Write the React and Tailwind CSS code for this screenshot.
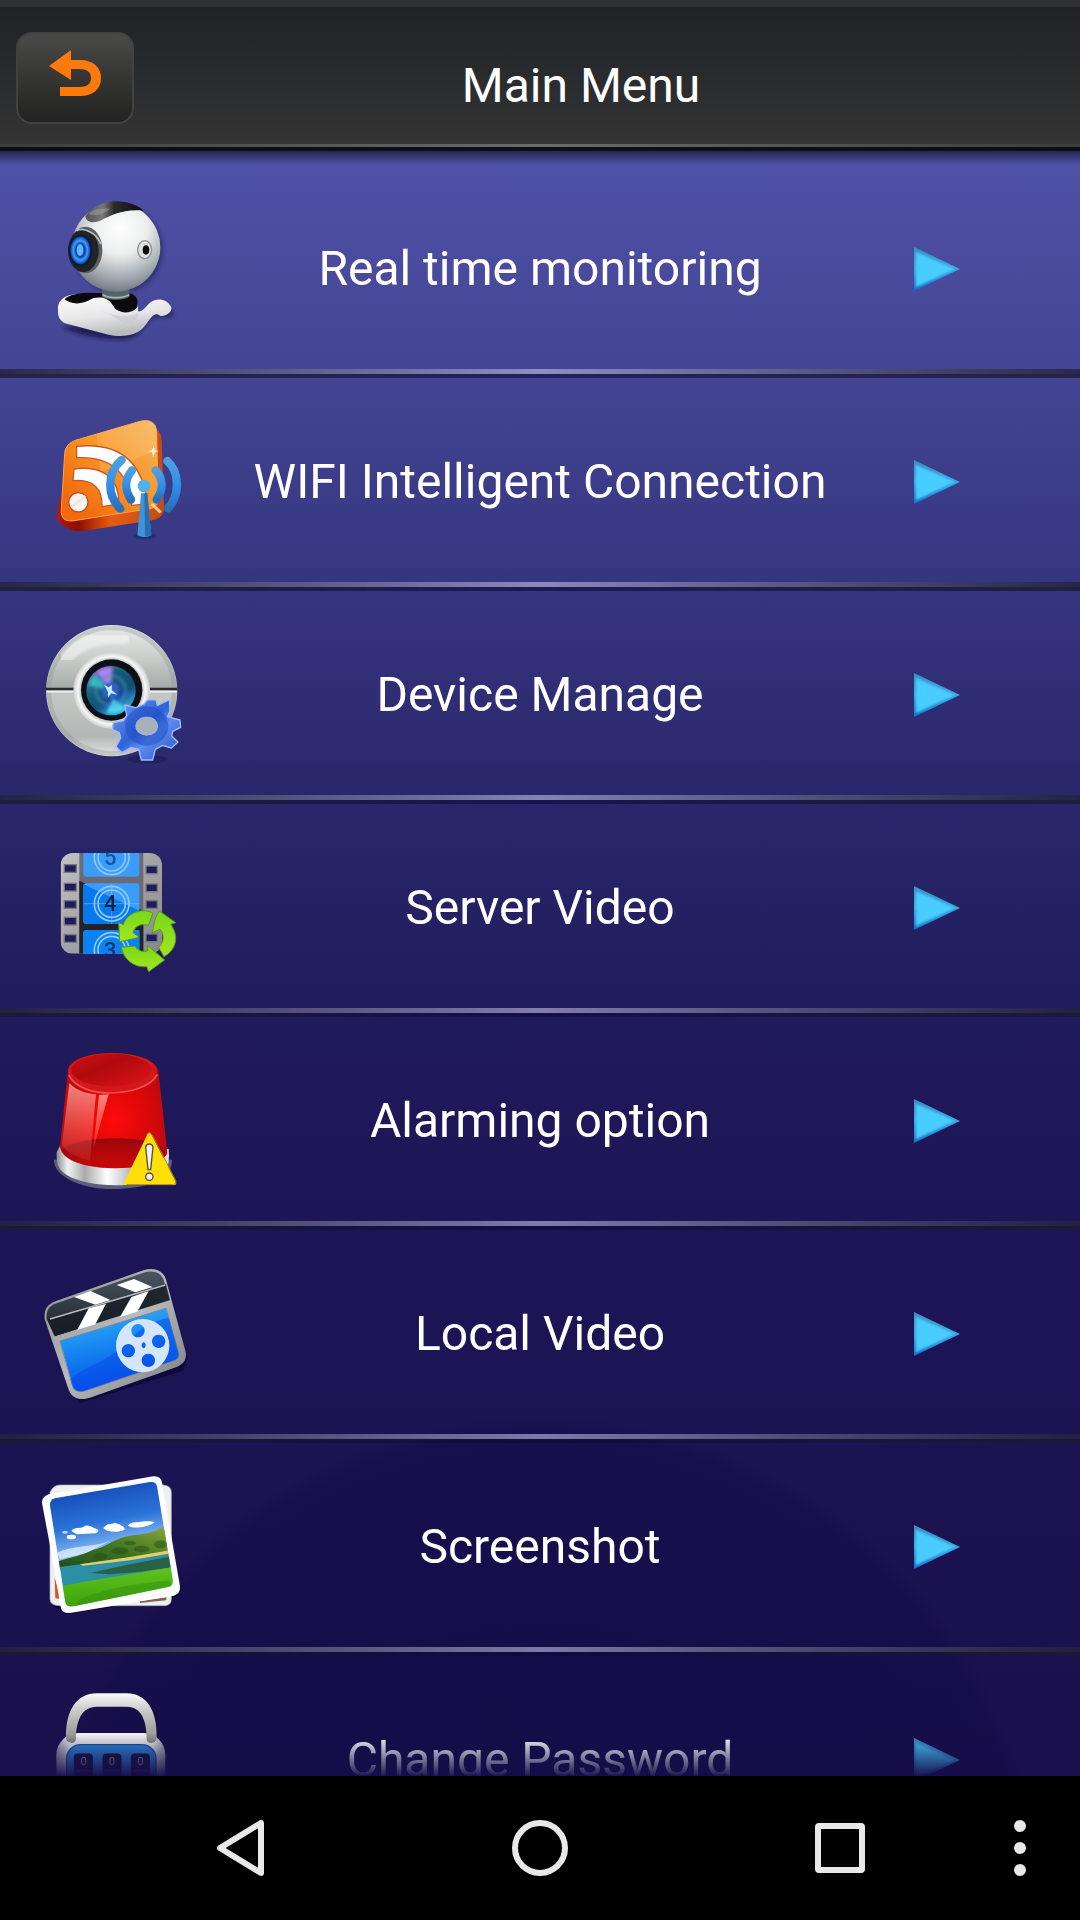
import React from 'react';

// 510 unit canvas, 3 units per pixel
function Icon({ top = 0, children }) {
  return (
    <svg viewBox={`0 ${top} 510 510`} className="w-[170px] h-[170px]" aria-hidden="true">
      {children}
    </svg>
  );
}

function WebcamIcon() {
  return (
    <Icon top={10}>
      <defs>
        <radialGradient id="camBall" cx="0.55" cy="0.28" r="0.75">
          <stop offset="0" stopColor="#fff" />
          <stop offset="0.4" stopColor="#eceeee" />
          <stop offset="0.75" stopColor="#a3abb1" />
          <stop offset="1" stopColor="#6a757e" />
        </radialGradient>
        <linearGradient id="camTop" x1="0" x2="1">
          <stop offset="0" stopColor="#555" />
          <stop offset="0.3" stopColor="#777" />
          <stop offset="0.5" stopColor="#2b2b2b" />
          <stop offset="1" stopColor="#0c0c0c" />
        </linearGradient>
        <linearGradient id="camBase" x1="0" y1="0" x2="0.3" y2="1">
          <stop offset="0" stopColor="#fff" />
          <stop offset="0.6" stopColor="#e6e6e8" />
          <stop offset="1" stopColor="#b9babd" />
        </linearGradient>
        <radialGradient id="camLens">
          <stop offset="0" stopColor="#4fb4ff" />
          <stop offset="0.25" stopColor="#1667e0" />
          <stop offset="0.45" stopColor="#0a3dab" />
          <stop offset="0.7" stopColor="#3fa0fa" />
          <stop offset="1" stopColor="#0d3c98" />
        </radialGradient>
        <filter id="soft" x="-20%" y="-20%" width="140%" height="140%">
          <feGaussianBlur stdDeviation="7" />
        </filter>
      </defs>
      <path d="M95 440C150 470 250 480 290 474C330 470 345 430 365 410C380 400 430 420 430 395L400 380L330 420Z" fill="#15163f" opacity="0.8" filter="url(#soft)" />
      <circle cx="266" cy="206" r="132" fill="#20214f" opacity="0.6" filter="url(#soft)" />
      <path d="M84 392C80 360 100 344 140 340H290C320 345 326 365 324 392C335 395 345 380 360 366C375 352 410 350 424 380C426 402 395 412 385 402C365 394 358 425 335 446C315 466 270 470 235 462L105 428C90 420 84 410 84 392Z" fill="url(#camBase)" />
      <path d="M104 356C120 336 180 334 225 338H300C322 345 326 362 322 380C310 396 280 402 256 385C235 350 220 348 190 352C160 372 125 374 104 356Z" fill="#0b0b0d" />
      <path d="M210 390C260 410 300 410 324 398C330 420 290 445 262 446C300 430 250 402 210 390Z" fill="#c9cacd" opacity="0.7" />
      <path d="M216 325H298V348C285 360 230 360 216 348Z" fill="#586368" />
      <path d="M218 342C240 354 275 354 298 342" stroke="#a9b3b8" strokeWidth="5" fill="none" />
      <circle cx="258" cy="200" r="133" fill="url(#camBall)" />
      <path d="M166 106C190 74 225 62 262 62C300 64 325 76 340 90C280 84 245 104 215 118C190 130 168 126 166 106Z" fill="url(#camTop)" />
      <path d="M176 100C195 80 225 84 240 84C222 100 195 108 176 100Z" fill="#999" opacity="0.6" />
      <ellipse cx="167" cy="208" rx="50" ry="70" fill="#5c5e61" />
      <ellipse cx="160" cy="210" rx="46" ry="64" fill="#222326" />
      <ellipse cx="152" cy="210" rx="35" ry="48" fill="#0a1a3c" />
      <ellipse cx="151" cy="209" rx="30" ry="42" fill="url(#camLens)" />
      <ellipse cx="150" cy="208" rx="10" ry="18" fill="#5fb9ff" />
      <path d="M140 150C160 140 200 155 212 190" stroke="#b5c2cc" strokeWidth="5" fill="none" />
      <ellipse cx="344" cy="207" rx="21" ry="27" fill="#dfe1e2" stroke="#8d9092" strokeWidth="4" />
      <ellipse cx="348" cy="208" rx="10" ry="14" fill="#0b0b0c" />
    </Icon>
  );
}

function WifiIcon() {
  return (
    <Icon top={-11}>
      <defs>
        <linearGradient id="rssFace" x1="0.1" y1="0.8" x2="0.9" y2="0">
          <stop offset="0" stopColor="#f26a0c" />
          <stop offset="0.5" stopColor="#fb9426" />
          <stop offset="1" stopColor="#f3b35c" />
        </linearGradient>
        <linearGradient id="rssSide" x1="0" x2="1">
          <stop offset="0" stopColor="#b31a03" />
          <stop offset="0.2" stopColor="#8c0f02" />
          <stop offset="0.5" stopColor="#e65a12" />
          <stop offset="1" stopColor="#c54c14" />
        </linearGradient>
        <linearGradient id="wave" x1="0" y1="0" x2="0" y2="1">
          <stop offset="0" stopColor="#4f9fe0" />
          <stop offset="0.6" stopColor="#2c8be8" />
          <stop offset="1" stopColor="#2a6fb8" />
        </linearGradient>
      </defs>
      <path d="M92 290C80 340 76 352 90 368L122 388C140 394 160 390 180 388L370 358C395 350 402 340 402 320L395 120C394 98 385 90 374 80Z" fill="url(#rssSide)" />
      <path d="M104 158C106 138 118 126 136 119L330 62C358 54 378 66 380 92L384 290C386 314 374 322 354 325L132 360C104 364 92 352 94 326Z" fill="url(#rssFace)" stroke="#ffa548" strokeWidth="3" />
      <path d="M210 215C280 190 340 165 381 148L380 92C378 66 358 54 330 62L200 100Z" fill="#ffe2a0" opacity="0.2" />
      <path d="M140 137C230 128 335 150 352 310L305 314C296 210 240 166 140 171Z" fill="#fff" stroke="#c65a2a" strokeWidth="4" />
      <path d="M132 205C210 194 268 224 266 310L216 318C218 262 190 236 129 240Z" fill="#fff" stroke="#c65a2a" strokeWidth="4" />
      <circle cx="145" cy="305" r="29" fill="#f7f4f0" stroke="#b8502a" strokeWidth="4" />
      <path d="M124 320L166 286" stroke="#ebe6e0" strokeWidth="8" />
      <path d="M371 134L374 148L386 151L375 155L370 170L366 155L354 152L367 147Z" fill="#fff" opacity="0.8" />
      <path d="M365 310L392 335" stroke="#ffe7b0" strokeWidth="9" opacity="0.8" />
      <g fill="none" stroke="url(#wave)" strokeLinecap="round" strokeWidth="25">
        <path d="M275 178C230 215 230 285 271 324" />
        <path d="M306 209C284 235 284 268 303 297" />
        <path d="M377 209C400 235 400 268 380 297" />
        <path d="M412 181C450 215 450 285 414 323" />
      </g>
      <ellipse cx="344" cy="406" rx="36" ry="10" fill="#1d2a6e" opacity="0.7" />
      <path d="M333 278H352L364 404C352 411 336 411 322 404Z" fill="#3f93d8" />
      <path d="M343 278H352L364 404L345 408Z" fill="#296fae" />
      <circle cx="342" cy="256" r="19" fill="#54b0ec" />
    </Icon>
  );
}

function DeviceIcon() {
  return (
    <Icon top={-2}>
      <defs>
        <linearGradient id="devBody" x1="0" y1="0" x2="0" y2="1">
          <stop offset="0" stopColor="#e6e9e8" />
          <stop offset="0.2" stopColor="#d0d5d2" />
          <stop offset="0.48" stopColor="#a5aba8" />
          <stop offset="0.52" stopColor="#c4c9c6" />
          <stop offset="0.85" stopColor="#b3b8b6" />
          <stop offset="1" stopColor="#e3e6e5" />
        </linearGradient>
        <radialGradient id="devRing">
          <stop offset="0.7" stopColor="#878c8a" />
          <stop offset="0.88" stopColor="#f6f7f7" />
          <stop offset="1" stopColor="#cbd0cd" />
        </radialGradient>
        <linearGradient id="devGlass" x1="0.2" y1="0" x2="0.8" y2="1">
          <stop offset="0" stopColor="#8e67dc" />
          <stop offset="0.3" stopColor="#206a88" />
          <stop offset="0.6" stopColor="#17408c" />
          <stop offset="1" stopColor="#39cbe8" />
        </linearGradient>
        <linearGradient id="gear" x1="0" y1="0" x2="1" y2="1">
          <stop offset="0" stopColor="#79a2f2" />
          <stop offset="0.45" stopColor="#2f62d8" />
          <stop offset="0.6" stopColor="#5e8cf0" />
          <stop offset="1" stopColor="#2450c0" />
        </linearGradient>
        <filter id="glassBlur">
          <feGaussianBlur stdDeviation="4" />
        </filter>
      </defs>
      <circle cx="245" cy="240" r="197" fill="url(#devBody)" />
      <circle cx="245" cy="240" r="188" fill="none" stroke="#8f9693" strokeWidth="14" opacity="0.35" />
      <path d="M110 140C150 90 220 75 280 80" stroke="#fff" strokeWidth="40" strokeLinecap="round" fill="none" opacity="0.45" filter="url(#glassBlur)" />
      <path d="M48 235H134M358 235H442" stroke="#262b2b" strokeWidth="8" />
      <path d="M50 243H134M358 243H440" stroke="#f2f4f3" strokeWidth="5" />
      <circle cx="245" cy="239" r="115" fill="url(#devRing)" />
      <circle cx="245" cy="238" r="92" fill="#0b1014" />
      <circle cx="243" cy="240" r="74" fill="url(#devGlass)" />
      <g filter="url(#glassBlur)">
        <path d="M243 240L200 184A70 70 0 0 1 245 170Z" fill="#c78bfa" opacity="0.8" />
        <path d="M243 240L176 224A70 70 0 0 1 194 192Z" fill="#2bc9bd" opacity="0.9" />
        <path d="M243 240L312 238A70 70 0 0 0 252 170Z" fill="#0f5570" opacity="0.85" />
        <path d="M243 240L210 300A70 70 0 0 1 174 250Z" fill="#0d5e6c" opacity="0.8" />
        <path d="M250 265L228 306A70 70 0 0 0 288 292Z" fill="#4ce0f4" opacity="0.9" />
        <circle cx="242" cy="239" r="44" fill="none" stroke="#4c8fd8" strokeWidth="7" opacity="0.6" />
        <circle cx="242" cy="239" r="26" fill="#2f62c8" />
      </g>
      <path d="M222 222L236 230L246 222L245 238L262 252L244 248L234 260L234 244Z" fill="#c8ecff" />
      <ellipse cx="352" cy="446" rx="60" ry="12" fill="#11124a" opacity="0.35" />
      <path
        fillRule="evenodd"
        d="M284 283L318 291L342 280L352 268L370 267L378 268L382 284L418 267L420 300L412 318L450 328L452 350L428 362L425 376L444 394L424 412L398 404L376 416L368 448H334L326 416L304 410L276 426L258 408L272 382L268 366L247 356L250 336L280 330L290 314ZM350 320C328 320 318 336 318 348C320 364 335 373 350 373C370 372 382 362 382 346C380 330 368 320 350 320Z"
        fill="url(#gear)"
        stroke="#9fbdf8"
        strokeWidth="4"
        strokeLinejoin="round"
      />
      <ellipse cx="350" cy="346" rx="50" ry="44" fill="none" stroke="#1a47bd" strokeWidth="30" opacity="0.5" />
      <path fill="#a9b0ba" d="M350 320C328 320 318 336 318 348C320 364 335 373 350 373C370 372 382 362 382 346C380 330 368 320 350 320Z" />
    </Icon>
  );
}

function ServerVideoIcon() {
  return (
    <Icon top={-23}>
      <defs>
        <linearGradient id="strip" x1="0" y1="0" x2="1" y2="1">
          <stop offset="0" stopColor="#c2c2c4" />
          <stop offset="1" stopColor="#85858b" />
        </linearGradient>
        <linearGradient id="leaf" x1="0" y1="0" x2="0" y2="1">
          <stop offset="0" stopColor="#76d817" />
          <stop offset="1" stopColor="#a4e524" />
        </linearGradient>
        <clipPath id="stripClip">
          <rect x="92" y="67" width="304" height="302" rx="36" />
        </clipPath>
      </defs>
      <g clipPath="url(#stripClip)">
        <rect x="92" y="67" width="304" height="302" fill="url(#strip)" />
        <path d="M148 67H340V369H148Z" fill="#6b6b73" />
        <path d="M148 150L340 240V369H148Z" fill="#222228" />
        <g fill="#3b9cff">
          <rect x="160" y="40" width="168" height="98" rx="10" />
          <rect x="160" y="158" width="168" height="122" rx="10" />
          <rect x="160" y="298" width="168" height="122" rx="10" />
        </g>
        <path d="M160 160L328 240V270Q328 280 318 280H170Q160 280 160 270Z" fill="#0879ec" />
        <path d="M160 308Q160 298 170 298H328V369H160Z" fill="#0b82f4" />
        <g fill="none" stroke="#8fc9ff" strokeWidth="5">
          <circle cx="245" cy="80" r="52" />
          <circle cx="245" cy="80" r="41" />
          <circle cx="245" cy="219" r="52" />
          <circle cx="245" cy="219" r="41" />
          <circle cx="245" cy="358" r="52" />
          <circle cx="245" cy="358" r="41" />
          <path d="M162 219H328M245 160V280" strokeWidth="2" opacity="0.7" />
        </g>
        <g fontFamily="Roboto, sans-serif" fontWeight="500" fontSize="66" textAnchor="middle">
          <text x="241" y="102" fill="#1b5498">5</text>
          <text x="241" y="242" fill="#04203e">4</text>
          <text x="241" y="382" fill="#0a3565">3</text>
        </g>
      </g>
      <g fill="#1f1c5c" stroke="#77777f" strokeWidth="4">
        <rect x="103" y="102" width="36" height="23" />
        <rect x="103" y="158" width="36" height="23" />
        <rect x="103" y="210" width="36" height="23" />
        <rect x="103" y="260" width="36" height="23" />
        <rect x="103" y="312" width="36" height="23" />
        <rect x="348" y="106" width="34" height="23" />
        <rect x="348" y="160" width="34" height="23" />
        <rect x="348" y="210" width="34" height="23" />
        <rect x="348" y="310" width="34" height="23" />
      </g>
      <g fill="url(#leaf)" stroke="#5a9d18" strokeWidth="3" strokeLinejoin="round">
        <path d="M369 247C330 228 288 252 280 282L266 276L269 333L328 320L309 306C315 284 335 278 355 284Z" />
        <path d="M366 306C374 280 372 262 388 241L437 276L422 281C450 320 436 360 402 378L386 350C404 335 402 306 390 296Z" />
        <path d="M274 350L314 346C326 362 340 366 354 360L352 344L404 388L356 423L350 408C310 412 280 384 274 350Z" />
      </g>
    </Icon>
  );
}

function AlarmIcon() {
  return (
    <Icon top={1}>
      <defs>
        <radialGradient id="siren" cx="0.5" cy="0.58" r="0.6">
          <stop offset="0" stopColor="#ff0a0a" />
          <stop offset="0.5" stopColor="#dd0808" />
          <stop offset="1" stopColor="#b30a0f" />
        </radialGradient>
        <linearGradient id="sirenTop" x1="0" y1="0" x2="1" y2="1">
          <stop offset="0" stopColor="#d01216" />
          <stop offset="0.4" stopColor="#b0090d" />
          <stop offset="1" stopColor="#dd1519" />
        </linearGradient>
        <linearGradient id="chrome" x1="0" x2="1">
          <stop offset="0" stopColor="#8e8e92" />
          <stop offset="0.1" stopColor="#f2f2f2" />
          <stop offset="0.25" stopColor="#a9a9ac" />
          <stop offset="0.45" stopColor="#fff" />
          <stop offset="0.75" stopColor="#9d9da2" />
          <stop offset="1" stopColor="#e2e2e4" />
        </linearGradient>
        <linearGradient id="shine" x1="0" y1="0" x2="0" y2="1">
          <stop offset="0" stopColor="#ffb0a8" stopOpacity="0.75" />
          <stop offset="1" stopColor="#ff8a80" stopOpacity="0.1" />
        </linearGradient>
        <linearGradient id="sirenFloor" x1="0" y1="0" x2="0" y2="1">
          <stop offset="0" stopColor="#6e060c" stopOpacity="0.7" />
          <stop offset="1" stopColor="#b3060c" stopOpacity="0.3" />
        </linearGradient>
      </defs>
      <path d="M72 372C70 420 150 460 245 460C350 460 428 430 426 372Z" fill="#5c5d78" />
      <path d="M80 350C78 395 90 410 130 428C190 454 310 456 370 432C410 415 420 395 416 340L90 330Z" fill="url(#chrome)" />
      <path d="M114 100C130 64 190 52 250 52C320 54 375 72 385 105L412 352C400 384 330 398 245 398C165 396 100 376 90 335Z" fill="url(#siren)" />
      <path d="M94 345C120 300 380 290 408 348C396 382 330 397 245 397C165 395 105 376 94 345Z" fill="url(#sirenFloor)" />
      <path d="M114 104C120 70 180 52 250 52C325 54 378 74 382 106C380 145 310 170 240 170C170 168 116 145 114 104Z" fill="#d5161a" />
      <ellipse cx="244" cy="103" rx="121" ry="49" fill="url(#sirenTop)" />
      <path d="M116 118C135 155 185 172 240 172C310 170 365 150 382 116" stroke="#f0504e" strokeWidth="5" fill="none" />
      <path d="M118 142C140 165 170 174 198 176L180 375C140 365 105 350 96 326Z" fill="url(#shine)" />
      <path d="M207 178L236 176L190 340L186 372Z" fill="url(#shine)" />
      <path d="M358 296L434 443H287Z" fill="#ffdf08" stroke="#ffdf08" strokeWidth="10" strokeLinejoin="round" />
      <path d="M350 296Q359 288 368 300L438 436Q438 446 430 447H290" fill="none" stroke="#a88e08" strokeWidth="3" />
      <path d="M347 334C350 322 366 322 369 334L362 402H354Z" fill="#f2f2f2" stroke="#57503a" strokeWidth="4" />
      <circle cx="358" cy="423" r="11" fill="#f2f2f2" stroke="#57503a" strokeWidth="4" />
    </Icon>
  );
}

function LocalVideoIcon() {
  return (
    <Icon top={-20}>
      <defs>
        <linearGradient id="clapFrame" x1="0" y1="0" x2="1" y2="1">
          <stop offset="0" stopColor="#8a8c8e" />
          <stop offset="0.5" stopColor="#b9babb" />
          <stop offset="1" stopColor="#77797c" />
        </linearGradient>
        <linearGradient id="clapBlue" x1="0.2" y1="0" x2="0.5" y2="1">
          <stop offset="0" stopColor="#35b3f7" />
          <stop offset="0.55" stopColor="#117cf0" />
          <stop offset="1" stopColor="#0648e6" />
        </linearGradient>
        <linearGradient id="clapDark" x1="0" y1="0" x2="0" y2="1">
          <stop offset="0" stopColor="#4b5660" />
          <stop offset="1" stopColor="#1b2129" />
        </linearGradient>
      </defs>
      <path d="M120 400L150 442L460 345L474 300Z" fill="#06042a" opacity="0.6" />
      <path d="M44 190C42 160 50 148 78 136L340 44C372 34 400 44 408 72L466 285C472 310 462 325 440 334L180 426C150 436 126 428 116 402Z" fill="url(#clapFrame)" />
      <path d="M50 190C48 165 56 152 80 143L340 51C370 42 394 50 402 76L418 132L74 242Z" fill="url(#clapDark)" />
      <path d="M52 190L408 84L420 134L74 242Z" fill="#171c24" opacity="0.75" />
      <path d="M132 124L182 106L241 133L196 147Z" fill="#fff" />
      <path d="M176 158L228 144L196 206L142 222Z" fill="#fff" />
      <path d="M260 88L312 70L368 94L316 110Z" fill="#fff" />
      <path d="M304 124L356 106L322 168L270 184Z" fill="#fff" />
      <path d="M60 190L406 88" stroke="#b9bec3" strokeWidth="4" />
      <path d="M90 256L408 158L446 292C448 306 440 312 428 316L170 404C150 411 134 408 128 392Z" fill="url(#clapBlue)" stroke="#7289a8" strokeWidth="3" />
      <path d="M122 372C160 330 240 320 300 250C350 200 400 190 416 186L446 292C448 306 440 312 428 316L170 404C150 411 134 408 128 392Z" fill="#0648ea" opacity="0.5" />
      <path
        fillRule="evenodd"
        d="M338 190A80 80 0 1 0 338 350A80 80 0 1 0 338 190ZM324 205A20 20 0 1 1 323.900 205ZM295 265A20 20 0 1 1 294.900 265ZM386 237A20 20 0 1 1 385.900 237ZM355 294A20 20 0 1 1 354.900 294ZM341 260A6 9 0 1 1 340.900 260Z"
        fill="#d4e6fb"
      />
    </Icon>
  );
}

function ScreenshotIcon() {
  return (
    <Icon top={-11}>
      <defs>
        <linearGradient id="sky" x1="0.2" y1="0" x2="0.4" y2="1">
          <stop offset="0" stopColor="#0f3fae" />
          <stop offset="0.35" stopColor="#2a72d8" />
          <stop offset="0.6" stopColor="#9cccf5" />
        </linearGradient>
        <linearGradient id="hill" x1="1" y1="0" x2="0" y2="1">
          <stop offset="0" stopColor="#8fa83a" />
          <stop offset="0.5" stopColor="#3e7420" />
          <stop offset="1" stopColor="#1f4a1c" />
        </linearGradient>
        <linearGradient id="grass" x1="0" y1="0" x2="0" y2="1">
          <stop offset="0" stopColor="#5cc41e" />
          <stop offset="1" stopColor="#3fa00c" />
        </linearGradient>
        <clipPath id="photoClip">
          <path d="M60 120Q58 104 74 98L360 49Q378 47 381 62L428 342Q430 360 415 364L130 422Q110 426 106 410Z" />
        </clipPath>
      </defs>
      <path d="M70 420L110 446L440 395L452 360Z" fill="#07042c" opacity="0.7" />
      <path d="M60 80Q70 58 90 58L400 58Q424 60 424 80L424 400Q424 418 405 420L90 420Q60 420 60 400Z" fill="#eef0f0" stroke="#a9acb8" strokeWidth="2" />
      <path d="M74 335L92 400L76 398Z" fill="#e2501c" />
      <path d="M330 406L410 395L408 404L330 412Z" fill="#806450" />
      <path d="M36 112Q34 94 56 86L370 32Q392 30 396 50L450 362Q452 384 432 390L120 442Q96 444 92 424L62 250Z" fill="#fdfdfe" />
      <g clipPath="url(#photoClip)">
        <rect x="50" y="40" width="390" height="400" fill="url(#sky)" />
        <g fill="#fff">
          <path d="M124 196C134 182 150 190 160 184C172 174 186 184 194 188C206 190 210 198 196 203L140 206Z" />
          <path d="M220 188C228 172 246 176 254 172C270 176 284 182 284 192C268 200 234 202 220 188Z" />
          <path d="M294 180C302 166 322 172 334 168C350 166 366 166 374 170C362 182 312 192 294 180Z" />
          <ellipse cx="124" cy="214" rx="14" ry="7" />
          <ellipse cx="105" cy="200" rx="9" ry="4" opacity="0.7" />
          <path d="M80 262C130 236 190 246 240 226L170 262L90 280Z" opacity="0.6" />
        </g>
        <path d="M80 288C120 275 160 268 190 252C230 244 260 214 300 210C340 206 380 200 400 182L425 262L90 312Z" fill="url(#hill)" />
        <g fill="#234f14" opacity="0.5">
          <ellipse cx="210" cy="272" rx="22" ry="10" />
          <ellipse cx="270" cy="256" rx="26" ry="11" />
          <ellipse cx="335" cy="250" rx="24" ry="10" />
          <ellipse cx="392" cy="236" rx="20" ry="12" />
          <ellipse cx="300" cy="232" rx="18" ry="6" />
        </g>
        <path d="M90 304L430 258V320L98 362Z" fill="#2c8fa6" />
        <path d="M180 322L300 296L425 272V305L330 318L240 326Z" fill="#275a34" opacity="0.85" />
        <path d="M150 296L300 274L430 252V262L300 284L160 300Z" fill="#e4cf6a" />
        <path d="M94 362C200 340 330 322 430 304V380L110 430Z" fill="url(#grass)" />
        <path d="M150 400C220 370 330 350 420 345L424 360L130 425Z" fill="#2f8a0a" opacity="0.4" />
      </g>
    </Icon>
  );
}

function PasswordIcon() {
  return (
    <Icon top={-17}>
      <defs>
        <linearGradient id="shackle" x1="0" y1="0" x2="0" y2="1">
          <stop offset="0" stopColor="#fafafa" />
          <stop offset="0.3" stopColor="#d0d0cc" />
          <stop offset="1" stopColor="#8a8b83" />
        </linearGradient>
        <linearGradient id="lockBody" x1="0" x2="1">
          <stop offset="0" stopColor="#9a9aa2" />
          <stop offset="0.12" stopColor="#f0f0f2" />
          <stop offset="0.88" stopColor="#f0f0f2" />
          <stop offset="1" stopColor="#9a9aa2" />
        </linearGradient>
      </defs>
      <rect x="79" y="157" width="327" height="280" rx="66" fill="url(#lockBody)" />
      <path d="M108 172C106 90 140 38 200 38H290C350 38 382 90 380 172C380 190 350 192 350 176C350 120 335 78 290 78H200C155 78 138 120 138 176C138 192 108 190 108 172Z" fill="url(#shackle)" />
      <rect x="110" y="192" width="268" height="240" rx="42" fill="#2f8cdd" stroke="#1c5c9c" strokeWidth="4" />
      <g fill="#191838" stroke="#101c48" strokeWidth="3">
        <rect x="133" y="220" width="54" height="150" rx="8" />
        <rect x="219" y="220" width="54" height="150" rx="8" />
        <rect x="304" y="220" width="54" height="150" rx="8" />
      </g>
      <path d="M133 270H187M219 270H273M304 270H358" stroke="#5a2a50" strokeWidth="4" />
      <g fontFamily="Roboto, sans-serif" fontSize="34" fill="#a9a9c4" textAnchor="middle">
        <text x="161" y="252">0</text>
        <text x="246" y="252">0</text>
        <text x="331" y="252">0</text>
      </g>
    </Icon>
  );
}

const menuItems = [
  { label: 'Real time monitoring', icon: WebcamIcon },
  { label: 'WIFI Intelligent Connection', icon: WifiIcon },
  { label: 'Device Manage', icon: DeviceIcon },
  { label: 'Server Video', icon: ServerVideoIcon },
  { label: 'Alarming option', icon: AlarmIcon },
  { label: 'Local Video', icon: LocalVideoIcon },
  { label: 'Screenshot', icon: ScreenshotIcon },
  { label: 'Change Password', icon: PasswordIcon },
];

function Arrow() {
  return (
    <svg viewBox="0 0 46 46" className="w-[46px] h-[46px]" aria-hidden="true">
      <defs>
        <linearGradient id="arrowEdge" x1="0" y1="0" x2="0" y2="1">
          <stop offset="0" stopColor="#3f8fc0" />
          <stop offset="0.5" stopColor="#38a6e0" />
          <stop offset="1" stopColor="#1170cc" />
        </linearGradient>
        <filter id="arrowSoft">
          <feGaussianBlur stdDeviation="1" />
        </filter>
      </defs>
      <path d="M0 1L46 23L0 45Z" fill="url(#arrowEdge)" />
      <path d="M2 6L41 23L2 41Z" fill="#4accff" filter="url(#arrowSoft)" />
    </svg>
  );
}

function MenuRow({ item }) {
  return (
    <li>
      <button
        type="button"
        className="grid h-[204px] w-full grid-cols-[200px_1fr_200px] items-center pt-1 text-white"
      >
        <span className="pl-[30px]">
          <item.icon />
        </span>
        <span className="whitespace-nowrap text-center text-5xl">{item.label}</span>
        <span className="pl-[34px]">
          <Arrow />
        </span>
      </button>
      <div className="h-[5px] bg-linear-to-r from-[#24233c]/80 via-[#c4c0e6]/60 to-[#24233c]/80" />
      <div className="h-1 bg-linear-to-r from-[#1c1b30]/80 via-[#0c0838]/60 to-[#1c1b30]/80" />
    </li>
  );
}

function Header() {
  return (
    <header>
      <div className="flex h-36 items-center border-t-[7px] border-[#2f3135] bg-linear-to-b from-[#202226] to-[#343434] pl-4 pt-5">
        <button
          type="button"
          aria-label="Back"
          className="flex h-[92px] w-[118px] items-center justify-center rounded-2xl border-2 border-[#424242] bg-linear-to-b from-[#4a4a48] to-[#222220] pb-2 mb-4"
        >
          <svg viewBox="0 0 54 48" className="w-[54px] h-12" aria-hidden="true">
            <path d="M1 16L23 0V10H32C46 10 53 18 53 28C53 39 45 46 32 46H12V37H31C39 37 43 34 43 28C43 22 39 19 31 19H23V30Z" fill="#ff7a0c" />
          </svg>
        </button>
        <h1 className="flex-1 pr-[52px] text-center text-5xl text-white">Main Menu</h1>
      </div>
      <div className="h-[3px] bg-linear-to-r from-[#3c3c38] via-[#6c6c6a] to-[#3c3c38]" />
      <div className="h-1 bg-[#0d0e16]" />
    </header>
  );
}

function NavBar() {
  return (
    <nav className="grid h-36 grid-cols-[120px_2fr_3fr_2fr_120px] items-center justify-items-center bg-black">
      <button type="button" aria-label="Back" className="col-start-2">
        <svg viewBox="0 0 50 58" className="w-[50px] h-[58px]" fill="none" stroke="#e8e8e8" strokeWidth="6" strokeLinejoin="round">
          <path d="M46 4V54L5 29Z" />
        </svg>
      </button>
      <button type="button" aria-label="Home">
        <svg viewBox="0 0 56 56" className="w-14 h-14" fill="none" stroke="#e8e8e8" strokeWidth="6">
          <circle cx="28" cy="28" r="25" />
        </svg>
      </button>
      <button type="button" aria-label="Recent apps">
        <svg viewBox="0 0 50 50" className="w-[50px] h-[50px]" fill="none" stroke="#e8e8e8" strokeWidth="6" strokeLinejoin="round">
          <rect x="3" y="3" width="44" height="44" rx="1" />
        </svg>
      </button>
      <button type="button" aria-label="More options">
        <svg viewBox="0 0 12 56" className="w-3 h-14" fill="#e8e8e8">
          <circle cx="6" cy="6" r="6" />
          <circle cx="6" cy="28" r="6" />
          <circle cx="6" cy="50" r="6" />
        </svg>
      </button>
    </nav>
  );
}

export default function App() {
  return (
    <div className="flex h-screen flex-col bg-black font-[Roboto,sans-serif]">
      <Header />
      <main className="min-h-0 flex-1 overflow-hidden bg-[radial-gradient(circle_at_50%_109%,#120b45a0_0,#120b4570_488px,transparent_506px),linear-gradient(#5052a8_0%,#434493_14%,#35357f_27%,#29276b_40%,#201b5c_53%,#1c1556_66%,#1c1352_82%,#190f4c_100%)]">
        <div className="h-3.5 bg-linear-to-b from-[#1a1b3c]/80 to-transparent" />
        <ul className="h-full [mask-image:linear-gradient(black_calc(100%-56px),transparent_calc(100%-12px))]">
          {menuItems.map((item) => (
            <MenuRow key={item.label} item={item} />
          ))}
        </ul>
      </main>
      <NavBar />
    </div>
  );
}
